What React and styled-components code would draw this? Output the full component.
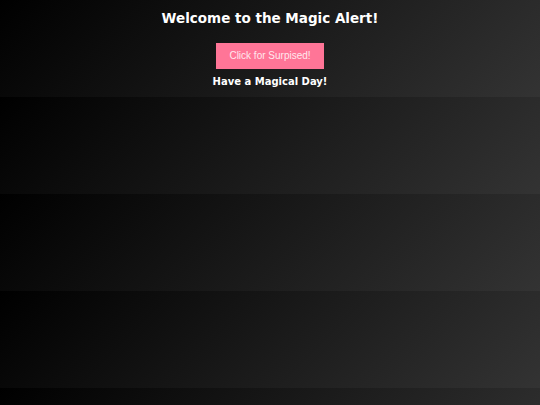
import React from "react";
import styled, { createGlobalStyle } from "styled-components";

const Global = createGlobalStyle`
  html { margin: 0; }
  body {
    margin: 0;
    background: linear-gradient(135deg, #000000, #333333);
    color: #ffffff;
    font-family: "DejaVu Sans", Verdana, sans-serif;
  }
`;

const Page = styled.main`
  display: flex;
  flex-direction: column;
  align-items: center;
  padding-top: 9.6px;
  height: 87.15px;
`;

const Title = styled.h1`
  margin: 0;
  font-size: 13.5px;
  font-weight: bold;
  line-height: 16px;
`;

const MagicButton = styled.button`
  margin-top: 17.4px;
  width: 108px;
  height: 26px;
  padding: 0;
  border: none;
  background: #ff7597;
  color: #ffe8ee;
  font-family: "Liberation Sans", Arial, sans-serif;
  font-size: 10px;
  cursor: pointer;
`;

const Message = styled.p`
  margin: 7.5px 0 0;
  font-size: 10px;
  font-weight: bold;
  line-height: 12px;
`;

export default function App() {
  return (
    <>
      <Global />
      <Page>
        <Title>Welcome to the Magic Alert!</Title>
        <MagicButton type="button">Click for Surpised!</MagicButton>
        <Message>Have a Magical Day!</Message>
      </Page>
    </>
  );
}
